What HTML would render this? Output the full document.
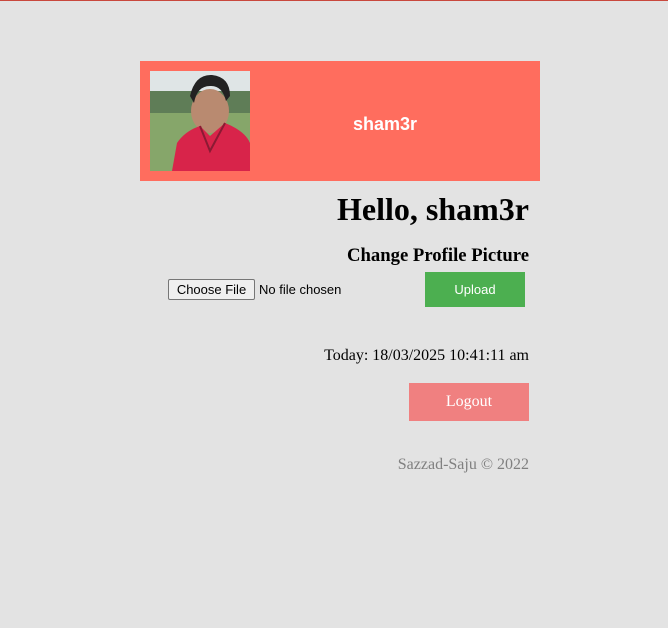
<!DOCTYPE html>
<html><head><style>
body{margin:0;width:668px;height:628px;background:#e3e3e3;position:relative;overflow:hidden;font-family:"Liberation Serif",serif;}
.a{position:absolute;}
</style></head><body>
<div class="a" style="left:0;top:0;width:668px;height:1px;background:#c9483d"></div>
<div class="a" style="left:140px;top:61px;width:400px;height:120px;background:#ff6d5e"></div>
<svg class="a" style="left:150px;top:71px" width="100" height="100" viewBox="0 0 100 100">
<rect width="100" height="100" fill="#dfe5e6"/>
<rect y="20" width="100" height="30" fill="#5f7d57"/>
<rect y="42" width="100" height="58" fill="#86a66a"/>
<ellipse cx="60" cy="40" rx="19" ry="22" fill="#b98a70"/>
<path d="M40 25 Q45 3 62 4 Q80 6 80 25 L76 30 Q72 14 60 15 Q47 15 44 32Z" fill="#222"/>
<path d="M22 100 L27 72 Q35 60 50 55 L60 65 L75 52 Q95 60 100 72 L100 100Z" fill="#d8244a"/>
<path d="M50 55 L60 80 L75 52" fill="none" stroke="#8b1a33" stroke-width="2"/>
</svg>
<div class="a" style="left:250px;top:114px;width:270px;text-align:center;color:#fff;font:bold 18px 'Liberation Sans',sans-serif;">sham3r</div>
<div class="a" style="right:139px;top:191px;font-weight:bold;font-size:32px;">Hello, sham3r</div>
<div class="a" style="right:139px;top:245px;font-weight:bold;font-size:18.7px;">Change Profile Picture</div>
<div class="a" style="left:168px;top:279px;width:87px;height:21px;box-sizing:border-box;border:1px solid #767676;border-radius:2px;background:#efefef;font:13px 'Liberation Sans',sans-serif;text-align:center;line-height:19px;">Choose File</div>
<div class="a" style="left:259px;top:282px;font:13px 'Liberation Sans',sans-serif;">No file chosen</div>
<div class="a" style="left:425px;top:272px;width:100px;height:35px;background:#4caf50;color:#fff;font:13px 'Liberation Sans',sans-serif;text-align:center;line-height:35px;">Upload</div>
<div class="a" style="right:139px;top:347px;font-size:16px;">Today: 18/03/2025 10:41:11 am</div>
<div class="a" style="left:409px;top:383px;width:120px;height:38px;background:#f08080;color:#fff;font-size:16px;text-align:center;line-height:38px;">Logout</div>
<div class="a" style="right:139px;top:456px;font-size:16px;color:#808080;">Sazzad-Saju © 2022</div>
</body></html>
